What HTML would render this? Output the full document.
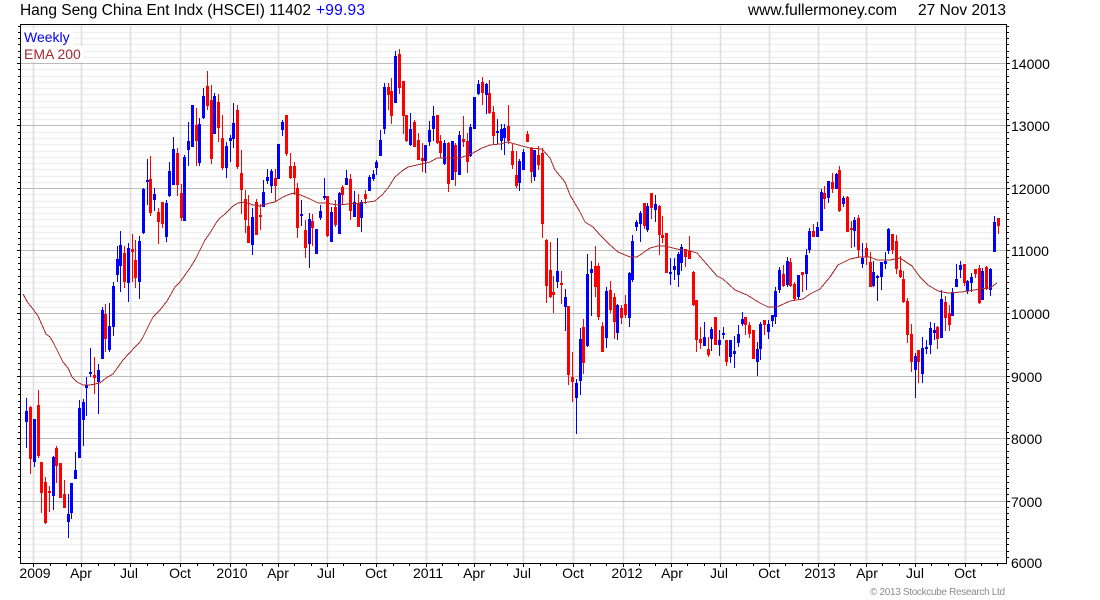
<!DOCTYPE html>
<html><head><meta charset="utf-8"><title>HSCEI</title>
<style>html,body{margin:0;padding:0;background:#fff;width:1100px;height:600px;overflow:hidden}svg{display:block}text{font-family:"Liberation Sans",Arial,sans-serif;font-size:14px;fill:#000}</style>
</head><body>
<svg width="1100" height="600" viewBox="0 0 1100 600" xmlns="http://www.w3.org/2000/svg">
<rect width="1100" height="600" fill="#fff"/>
<g fill="none">
<path stroke="#f0f0f0" stroke-width="1.5" d="M20 557.5H1006M20 551.5H1006M20 544.5H1006M20 538.5H1006M20 532.5H1006M20 526.5H1006M20 519.5H1006M20 513.5H1006M20 507.5H1006M20 494.5H1006M20 488.5H1006M20 482.5H1006M20 476.5H1006M20 469.5H1006M20 463.5H1006M20 457.5H1006M20 451.5H1006M20 444.5H1006M20 432.5H1006M20 426.5H1006M20 419.5H1006M20 413.5H1006M20 407.5H1006M20 401.5H1006M20 394.5H1006M20 388.5H1006M20 382.5H1006M20 369.5H1006M20 363.5H1006M20 357.5H1006M20 351.5H1006M20 344.5H1006M20 338.5H1006M20 332.5H1006M20 326.5H1006M20 319.5H1006M20 307.5H1006M20 301.5H1006M20 294.5H1006M20 288.5H1006M20 282.5H1006M20 276.5H1006M20 269.5H1006M20 263.5H1006M20 257.5H1006M20 244.5H1006M20 238.5H1006M20 232.5H1006M20 226.5H1006M20 219.5H1006M20 213.5H1006M20 207.5H1006M20 201.5H1006M20 194.5H1006M20 182.5H1006M20 176.5H1006M20 169.5H1006M20 163.5H1006M20 157.5H1006M20 151.5H1006M20 144.5H1006M20 138.5H1006M20 132.5H1006M20 119.5H1006M20 113.5H1006M20 107.5H1006M20 101.5H1006M20 94.5H1006M20 88.5H1006M20 82.5H1006M20 76.5H1006M20 69.5H1006M20 57.5H1006M20 51.5H1006M20 44.5H1006M20 38.5H1006M20 32.5H1006M20 26.5H1006"/>
<path stroke="#dddddd" stroke-width="1.5" d="M33.5 24V563M81.5 24V563M130.5 24V563M180.5 24V563M230.5 24V563M278.5 24V563M327.5 24V563M376.5 24V563M426.5 24V563M474.5 24V563M523.5 24V563M573.5 24V563M623.5 24V563M671.5 24V563M720.5 24V563M769.5 24V563M818.5 24V563M866.5 24V563M915.5 24V563M965.5 24V563"/>
<path stroke="#bbbbbb" stroke-width="1" shape-rendering="crispEdges" d="M20 63.5H1006M20 125.5H1006M20 188.5H1006M20 250.5H1006M20 313.5H1006M20 376.5H1006M20 438.5H1006M20 501.5H1006"/>
</g>
<rect x="22" y="29" width="51" height="16" fill="#fff"/>
<rect x="22" y="46" width="61" height="16" fill="#fff"/>
<g fill="none" shape-rendering="crispEdges">
<path stroke="#0000ff" stroke-width="1" d="M26.5 398V448M34.5 419V467M53.5 456V510M68.5 494V538M71.5 483V519M75.5 452V479M79.5 400V458M83.5 399V446M86.5 377V416M90.5 348V377M98.5 364V414M102.5 307V359M109.5 303V352M113.5 282V336M117.5 246V282M120.5 231V292M128.5 243V302M139.5 236V299M143.5 188V234M147.5 159V205M154.5 188V211M166.5 200V242M169.5 162V197M173.5 137V185M184.5 155V221M188.5 122V166M192.5 105V147M199.5 118V166M203.5 88V119M214.5 93V134M226.5 142V178M230.5 135V162M233.5 103V148M252.5 208V255M263.5 180V207M267.5 169V184M271.5 169V193M278.5 144V179M282.5 120V136M301.5 200V226M309.5 213V268M316.5 229V254M320.5 205V220M324.5 178V200M331.5 207V242M339.5 192V234M346.5 170V185M354.5 191V217M361.5 200V232M369.5 175V191M373.5 170V181M376.5 160V175M380.5 130V156M384.5 83V134M395.5 51V103M410.5 113V146M425.5 145V173M429.5 121V146M433.5 106V141M444.5 140V165M452.5 141V180M459.5 131V175M470.5 124V157M474.5 97V129M478.5 80V95M486.5 83V114M497.5 119V144M501.5 124V150M504.5 124V155M519.5 159V191M523.5 149V170M534.5 150V181M557.5 238V288M565.5 289V331M576.5 379V434M580.5 328V395M587.5 254V347M591.5 261V316M606.5 287V348M617.5 304V340M629.5 272V327M632.5 235V282M636.5 220V231M640.5 211V242M647.5 203V232M655.5 195V222M670.5 258V285M674.5 258V280M678.5 252V287M681.5 244V271M704.5 322V346M711.5 327V351M719.5 330V356M723.5 327V339M730.5 340V363M734.5 336V368M738.5 325V347M742.5 312V326M757.5 342V376M760.5 322V360M768.5 320V339M772.5 315V327M775.5 287V324M779.5 267V293M787.5 257V287M798.5 275V300M806.5 249V290M809.5 228V253M817.5 222V237M821.5 189V231M828.5 181V203M836.5 173V189M843.5 196V207M854.5 217V247M862.5 243V268M873.5 261V287M877.5 275V301M881.5 262V290M885.5 252V269M888.5 228V254M915.5 353V398M922.5 337V383M926.5 340V354M930.5 322V354M934.5 323V340M941.5 290V338M952.5 288V316M956.5 264V287M960.5 261V278M967.5 280V294M971.5 273V292M982.5 268V300M990.5 268V296M994.5 216V252"/>
<path stroke="#0000ff" stroke-width="3" d="M26.5 411V422M34.5 419V462M53.5 457V496M68.5 514V522M71.5 483V513M75.5 470V479M79.5 408V458M83.5 402V420M86.5 385V388M90.5 372V374M98.5 370V382M102.5 310V359M109.5 326V350M113.5 286V327M117.5 259V275M120.5 245V266M128.5 248V283M139.5 241V282M143.5 189V233M147.5 180V182M154.5 194V200M166.5 203V237M169.5 171V196M173.5 149V185M184.5 157V221M188.5 141V150M192.5 105V147M199.5 124V163M203.5 96V118M214.5 96V134M226.5 146V168M230.5 138V141M233.5 123V139M252.5 217V245M263.5 192V207M267.5 177V181M271.5 171V186M278.5 144V179M282.5 122V130M301.5 214V216M309.5 219V244M316.5 229V254M320.5 211V218M324.5 196V198M331.5 212V242M339.5 193V234M346.5 178V185M354.5 202V217M361.5 202V218M369.5 177V191M373.5 174V179M376.5 162V168M380.5 140V156M384.5 87V129M395.5 56V103M410.5 129V145M425.5 145V161M429.5 130V142M433.5 116V129M444.5 143V164M452.5 141V180M459.5 135V175M470.5 127V156M474.5 97V129M478.5 84V94M486.5 84V95M497.5 131V133M501.5 129V141M504.5 128V138M519.5 161V183M523.5 152V170M534.5 150V177M557.5 271V282M565.5 297V307M576.5 383V398M580.5 339V381M587.5 274V346M591.5 269V273M606.5 291V338M617.5 305V333M629.5 273V318M632.5 241V280M636.5 222V227M640.5 213V224M647.5 206V230M655.5 204V210M670.5 272V274M674.5 266V270M678.5 254V275M681.5 247V263M704.5 337V346M711.5 329V339M719.5 340V345M723.5 333V335M730.5 340V357M734.5 351V354M738.5 334V343M742.5 319V324M757.5 349V362M760.5 324V349M768.5 324V332M772.5 315V321M775.5 291V317M779.5 270V290M787.5 261V285M798.5 275V297M806.5 255V274M809.5 231V250M817.5 227V237M821.5 192V231M828.5 181V198M836.5 174V189M843.5 198V204M854.5 220V231M862.5 258V264M873.5 272V286M877.5 276V278M881.5 262V277M885.5 261V264M888.5 229V251M915.5 356V370M922.5 348V374M926.5 347V349M930.5 328V345M934.5 330V333M941.5 299V338M952.5 292V316M956.5 279V287M960.5 265V270M967.5 281V291M971.5 277V283M982.5 271V300M990.5 269V290M994.5 222V252"/>
<path stroke="#ff0000" stroke-width="1" d="M30.5 406V474M38.5 390V458M41.5 462V513M45.5 477V524M49.5 486V512M56.5 446V483M60.5 463V498M64.5 480V508M94.5 357V394M105.5 304V352M124.5 246V288M132.5 234V282M135.5 240V288M150.5 156V216M158.5 208V244M162.5 202V228M177.5 148V196M181.5 184V221M196.5 108V166M207.5 71V110M211.5 85V164M218.5 94V142M222.5 115V170M237.5 105V169M241.5 150V214M245.5 190V233M248.5 195V243M256.5 199V235M260.5 204V230M275.5 169V201M286.5 115V156M290.5 153V179M294.5 162V195M297.5 183V238M305.5 220V258M312.5 214V246M327.5 196V237M335.5 200V227M342.5 185V204M350.5 174V220M358.5 194V227M365.5 190V204M388.5 83V110M391.5 78V124M399.5 49V94M403.5 81V134M406.5 115V142M414.5 120V147M418.5 133V160M422.5 143V172M437.5 115V144M440.5 135V158M448.5 142V192M455.5 143V186M463.5 116V147M467.5 133V173M482.5 77V105M489.5 80V114M493.5 106V144M508.5 105V144M512.5 144V169M516.5 151V188M527.5 131V142M531.5 147V183M538.5 146V170M542.5 148V238M546.5 239V303M550.5 242V298M553.5 276V313M561.5 271V304M568.5 306V385M572.5 352V402M583.5 319V374M595.5 246V297M598.5 263V320M602.5 322V352M610.5 281V313M614.5 293V339M621.5 305V324M625.5 295V318M644.5 203V229M651.5 193V219M659.5 205V255M662.5 216V243M666.5 233V273M685.5 249V267M689.5 236V259M693.5 271V306M696.5 300V352M700.5 327V349M708.5 337V357M715.5 317V345M726.5 340V366M745.5 317V335M749.5 322V338M753.5 330V359M764.5 320V335M783.5 265V287M790.5 258V287M794.5 282V301M802.5 272V292M813.5 224V237M824.5 186V209M832.5 173V193M839.5 166V212M847.5 196V232M851.5 221V248M858.5 215V257M866.5 243V265M870.5 252V287M892.5 234V254M896.5 235V274M900.5 256V278M903.5 271V303M907.5 298V343M911.5 324V372M918.5 350V383M937.5 326V349M945.5 296V331M949.5 305V331M964.5 264V286M975.5 269V278M979.5 265V304M986.5 266V290M998.5 218V234"/>
<path stroke="#ff0000" stroke-width="3" d="M30.5 407V459M38.5 405V456M41.5 462V493M45.5 482V523M49.5 491V493M56.5 448V466M60.5 463V498M64.5 494V508M94.5 375V378M105.5 314V339M124.5 253V282M132.5 249V252M135.5 260V278M150.5 179V213M158.5 212V222M162.5 202V224M177.5 153V185M181.5 193V218M196.5 125V141M207.5 86V106M211.5 100V159M218.5 102V128M222.5 138V168M237.5 110V167M241.5 173V190M245.5 199V220M248.5 226V243M256.5 202V235M260.5 215V217M275.5 178V186M286.5 115V154M290.5 166V178M294.5 166V178M297.5 188V228M305.5 230V248M312.5 221V228M327.5 196V236M335.5 207V225M342.5 187V195M350.5 179V211M358.5 203V227M365.5 194V199M388.5 87V95M391.5 91V116M399.5 54V88M403.5 81V116M406.5 115V141M414.5 122V147M418.5 140V160M422.5 158V161M437.5 115V143M440.5 141V153M448.5 143V184M455.5 145V172M463.5 139V142M467.5 141V162M482.5 82V93M489.5 93V113M493.5 112V136M508.5 126V141M512.5 151V165M516.5 175V186M527.5 134V142M531.5 148V172M538.5 155V165M542.5 153V224M546.5 240V286M550.5 270V297M553.5 292V295M561.5 283V285M568.5 306V375M572.5 377V382M583.5 327V363M595.5 266V287M598.5 266V317M602.5 326V352M610.5 290V310M614.5 297V322M621.5 308V318M625.5 304V315M644.5 203V226M651.5 193V208M659.5 206V235M662.5 235V238M666.5 233V273M685.5 249V257M689.5 251V259M693.5 272V305M696.5 300V340M700.5 339V343M708.5 349V355M715.5 317V345M726.5 340V362M745.5 317V325M749.5 325V334M753.5 330V359M764.5 320V325M783.5 274V286M790.5 262V286M794.5 284V299M802.5 272V275M813.5 231V237M824.5 193V199M832.5 182V189M839.5 170V211M847.5 197V232M851.5 228V230M858.5 218V250M866.5 248V257M870.5 262V287M892.5 234V250M896.5 241V269M900.5 270V277M903.5 279V302M907.5 301V335M911.5 334V362M918.5 350V362M937.5 327V339M945.5 302V318M949.5 313V325M964.5 264V283M975.5 269V274M979.5 268V303M986.5 267V289M998.5 218V226"/>
<polyline stroke="#a52a2a" stroke-width="1" points="23,294 28,303 33,309 38,316 42,325 46,334 50,337 54,344 58,352 63,362 68,368 72,377 77,382 83,385 90,385 100,383 106,378 113,374 118,367 123,360 135,347 140,342 143,337 148,327 153,317 160,310 167,301 175,287 180,282 190,268 195,260 200,250 205,240 210,233 216,223 220,218 225,214 230,209 233,206 238,203 245,202 253,205 260,206 270,203 275,202 283,197 290,194 295,193 303,196 310,199 318,203 325,203 338,205 348,204 362,203 375,201 382,195 388,188 395,177 402,171 408,167 417,165 430,162 437,158 447,158 460,158 473,153 482,148 490,145 500,144 508,142 522,146 530,148 542,149 550,158 555,170 565,182 570,195 580,212 585,222 593,227 600,235 608,243 618,252 630,257 637,257 650,248 658,246 665,246 677,249 690,251 697,253 710,268 717,276 723,279 735,290 747,295 760,303 768,307 777,307 790,301 803,299 810,294 820,289 830,277 838,265 850,259 860,257 870,257 877,260 890,260 900,258 912,266 920,277 928,285 938,291 948,293 962,292 980,289 990,288 997,283"/>
<path stroke="#000" stroke-width="1" d="M20.5 24V564M1006.5 24V564M20 24.5H1007M20 563.5H1007"/>
<path stroke="#000" stroke-width="1" d="M17 63.5H20M17 125.5H20M17 188.5H20M17 250.5H20M17 313.5H20M17 376.5H20M17 438.5H20M17 501.5H20M1007 63.5H1010M1007 125.5H1010M1007 188.5H1010M1007 250.5H1010M1007 313.5H1010M1007 376.5H1010M1007 438.5H1010M1007 501.5H1010M33.5 564V567M81.5 564V567M130.5 564V567M180.5 564V567M230.5 564V567M278.5 564V567M327.5 564V567M376.5 564V567M426.5 564V567M474.5 564V567M523.5 564V567M573.5 564V567M623.5 564V567M671.5 564V567M720.5 564V567M769.5 564V567M818.5 564V567M866.5 564V567M915.5 564V567M965.5 564V567"/>
<path stroke="#000" stroke-width="1" d="M50.5 564V566M66.5 564V566M98.5 564V566M114.5 564V566M147.5 564V566M163.5 564V566M197.5 564V566M213.5 564V566M246.5 564V566M262.5 564V566M294.5 564V566M311.5 564V566M343.5 564V566M360.5 564V566M393.5 564V566M409.5 564V566M442.5 564V566M458.5 564V566M490.5 564V566M507.5 564V566M540.5 564V566M556.5 564V566M590.5 564V566M606.5 564V566M639.5 564V566M655.5 564V566M687.5 564V566M704.5 564V566M736.5 564V566M753.5 564V566M785.5 564V566M802.5 564V566M834.5 564V566M850.5 564V566M882.5 564V566M899.5 564V566M931.5 564V566M948.5 564V566M981.5 564V566M997.5 564V566"/>
<path stroke="#000" stroke-width="1" d="M18 26.5H20M18 32.5H20M18 38.5H20M18 44.5H20M18 51.5H20M18 57.5H20M18 69.5H20M18 76.5H20M18 82.5H20M18 88.5H20M18 94.5H20M18 101.5H20M18 107.5H20M18 113.5H20M18 119.5H20M18 132.5H20M18 138.5H20M18 144.5H20M18 151.5H20M18 157.5H20M18 163.5H20M18 169.5H20M18 176.5H20M18 182.5H20M18 194.5H20M18 201.5H20M18 207.5H20M18 213.5H20M18 219.5H20M18 226.5H20M18 232.5H20M18 238.5H20M18 244.5H20M18 257.5H20M18 263.5H20M18 269.5H20M18 276.5H20M18 282.5H20M18 288.5H20M18 294.5H20M18 301.5H20M18 307.5H20M18 319.5H20M18 326.5H20M18 332.5H20M18 338.5H20M18 344.5H20M18 351.5H20M18 357.5H20M18 363.5H20M18 369.5H20M18 382.5H20M18 388.5H20M18 394.5H20M18 401.5H20M18 407.5H20M18 413.5H20M18 419.5H20M18 426.5H20M18 432.5H20M18 444.5H20M18 451.5H20M18 457.5H20M18 463.5H20M18 469.5H20M18 476.5H20M18 482.5H20M18 488.5H20M18 494.5H20M18 507.5H20M18 513.5H20M18 519.5H20M18 526.5H20M18 532.5H20M18 538.5H20M18 544.5H20M18 551.5H20M18 557.5H20"/>
<path stroke="#000" stroke-width="1" d="M1007 26.5H1009M1007 32.5H1009M1007 38.5H1009M1007 44.5H1009M1007 51.5H1009M1007 57.5H1009M1007 69.5H1009M1007 76.5H1009M1007 82.5H1009M1007 88.5H1009M1007 94.5H1009M1007 101.5H1009M1007 107.5H1009M1007 113.5H1009M1007 119.5H1009M1007 132.5H1009M1007 138.5H1009M1007 144.5H1009M1007 151.5H1009M1007 157.5H1009M1007 163.5H1009M1007 169.5H1009M1007 176.5H1009M1007 182.5H1009M1007 194.5H1009M1007 201.5H1009M1007 207.5H1009M1007 213.5H1009M1007 219.5H1009M1007 226.5H1009M1007 232.5H1009M1007 238.5H1009M1007 244.5H1009M1007 257.5H1009M1007 263.5H1009M1007 269.5H1009M1007 276.5H1009M1007 282.5H1009M1007 288.5H1009M1007 294.5H1009M1007 301.5H1009M1007 307.5H1009M1007 319.5H1009M1007 326.5H1009M1007 332.5H1009M1007 338.5H1009M1007 344.5H1009M1007 351.5H1009M1007 357.5H1009M1007 363.5H1009M1007 369.5H1009M1007 382.5H1009M1007 388.5H1009M1007 394.5H1009M1007 401.5H1009M1007 407.5H1009M1007 413.5H1009M1007 419.5H1009M1007 426.5H1009M1007 432.5H1009M1007 444.5H1009M1007 451.5H1009M1007 457.5H1009M1007 463.5H1009M1007 469.5H1009M1007 476.5H1009M1007 482.5H1009M1007 488.5H1009M1007 494.5H1009M1007 507.5H1009M1007 513.5H1009M1007 519.5H1009M1007 526.5H1009M1007 532.5H1009M1007 538.5H1009M1007 544.5H1009M1007 551.5H1009M1007 557.5H1009"/>
</g>
<text x="20" y="15" textLength="291" style="font-size:15.5px">Hang Seng China Ent Indx (HSCEI) 11402</text>
<text x="316" y="15" textLength="49" style="font-size:15.5px;fill:#0000ff">+99.93</text>
<text x="748" y="15" textLength="149" style="font-size:15.5px">www.fullermoney.com</text>
<text x="918" y="15" textLength="88" style="font-size:15.5px">27 Nov 2013</text>
<text x="24" y="42" style="fill:#0000ff">Weekly</text>
<text x="24" y="59" style="fill:#a52a2a">EMA 200</text>
<g>
<text x="1011" y="69">14000</text><text x="1011" y="131">13000</text><text x="1011" y="194">12000</text><text x="1011" y="256">11000</text><text x="1011" y="319">10000</text><text x="1011" y="382">9000</text><text x="1011" y="444">8000</text><text x="1011" y="507">7000</text><text x="1011" y="568">6000</text>
</g>
<g text-anchor="middle">
<text x="35" y="578">2009</text><text x="81" y="578">Apr</text><text x="129" y="578">Jul</text><text x="180" y="578">Oct</text>
<text x="232" y="578">2010</text><text x="278" y="578">Apr</text><text x="326" y="578">Jul</text><text x="376" y="578">Oct</text>
<text x="428" y="578">2011</text><text x="474" y="578">Apr</text><text x="522" y="578">Jul</text><text x="573" y="578">Oct</text>
<text x="627" y="578">2012</text><text x="672" y="578">Apr</text><text x="719" y="578">Jul</text><text x="769" y="578">Oct</text>
<text x="820" y="578">2013</text><text x="867" y="578">Apr</text><text x="915" y="578">Jul</text><text x="965" y="578">Oct</text>
</g>
<text x="870" y="595" textLength="135" lengthAdjust="spacing" style="font-size:10px;fill:#8c8c8c">© 2013 Stockcube Research Ltd</text>
</svg>
</body></html>
